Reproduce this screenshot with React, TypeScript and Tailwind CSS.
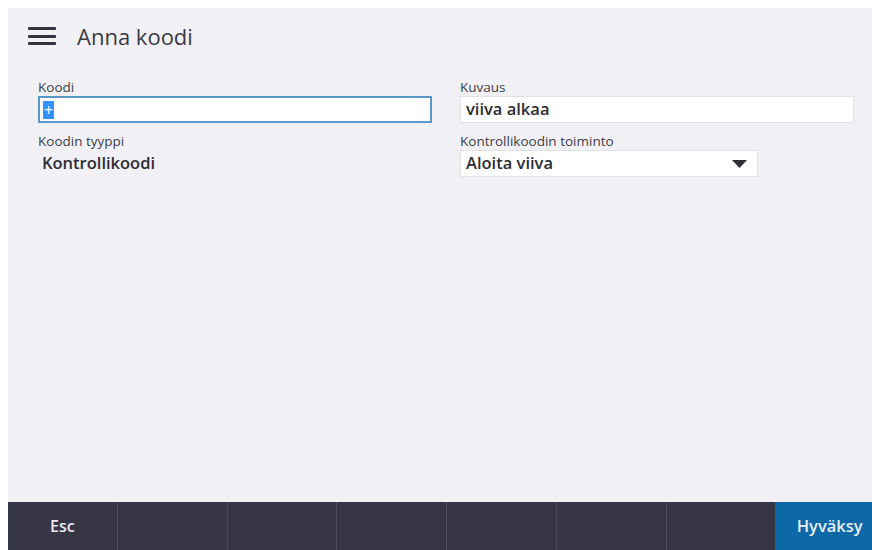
import { useState } from 'react'

const labelCls = 'block text-[13.5px] leading-[18px] text-[#3e3e46]'

function Field({ label, children }: { label: string; children: React.ReactNode }) {
  return (
    <div className="flex flex-col">
      <span className={labelCls}>{label}</span>
      {children}
    </div>
  )
}

export default function App() {
  const [code] = useState('+')
  const footer = ['Esc', '', '', '', '', '', '']

  return (
    <div
      className="w-[872px] h-[550px] bg-white pt-2 pl-2 overflow-hidden"
      style={{ fontFamily: '"Open Sans", "Noto Sans", sans-serif' }}
    >
      {/* App panel is a little wider than the window and gets clipped on the right */}
      <div className="flex flex-col w-[876px] h-full bg-[#f1f0f5]">
        {/* Header */}
        <div className="flex items-center h-[56px] pl-5">
          <div className="flex flex-col gap-[4.5px] w-[28px]">
            <span className="block h-[3px] bg-[#33333f] rounded-[1px]" />
            <span className="block h-[3px] bg-[#33333f] rounded-[1px]" />
            <span className="block h-[3px] bg-[#33333f] rounded-[1px]" />
          </div>
          <h1 className="ml-[21px] text-[22px] text-[#3a3a46] leading-none">Anna koodi</h1>
        </div>

        {/* Form */}
        <div className="grid grid-cols-[394px_394px] gap-x-[28px] pl-[30px] mt-[14px]">
          <div className="flex flex-col gap-[9px]">
            <Field label="Koodi">
              <div className="h-[27px] bg-white border-2 border-[#5a96c8] flex items-center pl-[3px]">
                <span className="bg-[#3390ff] text-white text-[16px] leading-[18px] px-[1px]">{code}</span>
              </div>
            </Field>
            <Field label="Koodin tyyppi">
              <div className="h-[27px] flex items-center pl-[4px] text-[16.5px] font-semibold text-[#2d2d33]">
                Kontrollikoodi
              </div>
            </Field>
          </div>
          <div className="flex flex-col gap-[9px]">
            <Field label="Kuvaus">
              <div className="h-[27px] bg-white border border-[#e2e2e6] flex items-center pl-[5px] text-[16.5px] font-semibold text-[#2d2d33]">
                viiva alkaa
              </div>
            </Field>
            <Field label="Kontrollikoodin toiminto">
              <div className="w-[298px] h-[27px] bg-white border border-[#e2e2e6] flex items-center justify-between pl-[5px] pr-[10px] text-[16.5px] font-semibold text-[#2d2d33]">
                <span>Aloita viiva</span>
                <svg width="15" height="8" viewBox="0 0 15 8">
                  <polygon points="0,0 15,0 7.5,8" fill="#2d2d33" />
                </svg>
              </div>
            </Field>
          </div>
        </div>

        <div className="flex-1" />

        {/* Footer buttons */}
        <div className="flex h-[48px] bg-[#363545]">
          {footer.map((t, i) => (
            <button
              key={i}
              className={`flex-1 flex items-center justify-center text-[16px] font-semibold text-[#e8e8ee] ${
                i > 0 ? 'border-l border-[#4d4c5c]' : ''
              }`}
            >
              {t}
            </button>
          ))}
          <button className="flex-1 flex items-center justify-center bg-[#0d68a8] text-[16.5px] font-semibold text-[#e8eef6]">
            Hyväksy
          </button>
        </div>
      </div>
    </div>
  )
}
